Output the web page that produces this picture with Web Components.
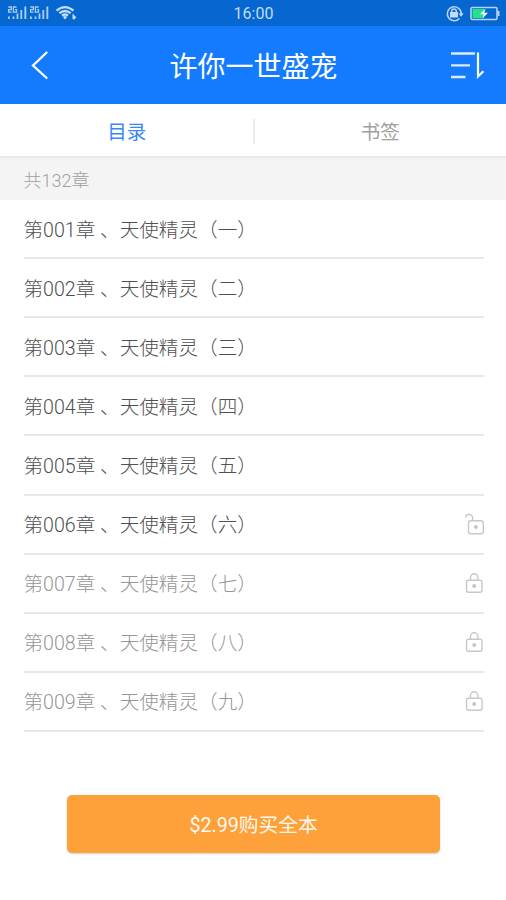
<!DOCTYPE html>
<html lang="zh-CN">
<head>
<meta charset="utf-8">
<title>许你一世盛宠</title>
<style>
  body {
    margin: 0;
    background: #fff;
    font-family: Roboto, "Noto Sans CJK SC", sans-serif;
  }
</style>
</head>
<body>
<book-catalog>
  <status-bar>16:00</status-bar>
  <title-bar>许你一世盛宠</title-bar>
  <tab-bar>
    <span slot="first">目录</span>
    <span slot="second">书签</span>
  </tab-bar>
  <chapter-count>共132章</chapter-count>
  <chapter-row>第001章 、天使精灵（一）</chapter-row>
  <chapter-row>第002章 、天使精灵（二）</chapter-row>
  <chapter-row>第003章 、天使精灵（三）</chapter-row>
  <chapter-row>第004章 、天使精灵（四）</chapter-row>
  <chapter-row>第005章 、天使精灵（五）</chapter-row>
  <chapter-row lock="open">第006章 、天使精灵（六）</chapter-row>
  <chapter-row lock="closed">第007章 、天使精灵（七）</chapter-row>
  <chapter-row lock="closed">第008章 、天使精灵（八）</chapter-row>
  <chapter-row lock="closed">第009章 、天使精灵（九）</chapter-row>
  <buy-button>$2.99购买全本</buy-button>
</book-catalog>

<script>
/**
 * Page container
 */
class BookCatalog extends HTMLElement {
    connectedCallback() {
        this.attachShadow({ mode: 'open' }).innerHTML = `
      <style>
        :host {
          display: flex;
          flex-direction: column;
          height: 900px;
          overflow: hidden;
        }
      </style>
      <slot></slot>
    `;
    }
}

/**
 * Phone status bar: signal and wifi, clock, rotation lock and battery
 */
class StatusBar extends HTMLElement {
    connectedCallback() {
        this.attachShadow({ mode: 'open' }).innerHTML = `
      <style>
        :host {
          display: grid;
          grid-template-columns: 1fr auto 1fr;
          align-items: center;
          height: 26px;
          padding: 0 6px 0 7px;
          box-sizing: border-box;
          background: #0567cf;
          color: #c3dcf8;
          font-size: 16px;
        }
        svg {
          display: block;
        }
        .right {
          justify-self: end;
        }
        .clock {
          padding-top: 2px;
          line-height: 24px;
        }
      </style>
      <svg width="72" height="26" viewBox="7 0 72 26" fill="#a9cdf5">
        <g id="signal">
          <path d="M8 16.500h1.800V19H8zM12.600 16.500h1.800V19h-1.800zM16.600 13.500h1.800V19h-1.800zM20.400 10h1.800v9h-1.800zM24.400 6.500h1.900V19h-1.900z"/>
          <path d="M8.300 7h3v2.600H8.600v2.600h3M16.600 7h-3.200v5.200h3.100v-2.500h-1.400" fill="none" stroke="#a9cdf5" stroke-width="1.300"/>
        </g>
        <use href="#signal" x="22"/>
        <g fill="none" stroke="#c3dcf8" stroke-width="2.300">
          <path d="M56.500 10.600q8.500-7 17 0M59.300 13.200q5.700-4.500 11.400 0M62 15.700q3-2.300 6 0"/>
        </g>
        <path d="M62.800 17l2.200-1.200 2.200 1.200L65 19.500zM72.500 13.500l3.800 3.800-2.300 2.500-1.500-1z" fill="#c3dcf8"/>
      </svg>
      <div class="clock"><slot></slot></div>
      <svg class="right" width="56" height="26" viewBox="444 0 56 26">
        <g fill="none" stroke="#b5d4f7" stroke-width="1.500">
          <path d="M459.500 18.500a7 7 0 1 1 1.800-4.500"/>
          <path d="M451.700 12.500v-1.200a2.300 2.300 0 0 1 4.600 0v1.200"/>
        </g>
        <path d="M450 12h8v5.500h-8zM458.500 13.500h5.200l-2.600 3.200z" fill="#c3dcf8"/>
        <rect x="471" y="7.500" width="26" height="12" rx="1.500" fill="none" stroke="#b5d4f7" stroke-width="1.600"/>
        <path d="M497.500 11h2v5h-2z" fill="#b5d4f7"/>
        <path d="M472.500 9H484v9h-11.500z" fill="#23e28c"/>
        <path d="M485.500 8.500l-5.300 5.800h3.600l-1.300 4.200 5.500-5.800h-3.700z" fill="#f2fbff"/>
      </svg>
    `;
    }
}

/**
 * Blue header with back and sort icons
 */
class TitleBar extends HTMLElement {
    connectedCallback() {
        this.attachShadow({ mode: 'open' }).innerHTML = `
      <style>
        :host {
          display: grid;
          grid-template-columns: 36px 1fr 36px;
          align-items: center;
          height: 78px;
          padding: 0 20px 0 21px;
          box-sizing: border-box;
          background: #147bff;
          color: #fff;
          font-size: 28px;
        }
        .title {
          padding-top: 5px;
          line-height: 40px;
          text-align: center;
        }
        svg {
          display: block;
          width: 36px;
          height: 78px;
          fill: none;
          stroke: #fff;
        }
      </style>
      <svg viewBox="21 26 36 78"><path d="M47.200 52L33 65.500l14.200 13" stroke-width="2.300"/></svg>
      <div class="title"><slot></slot></div>
      <svg viewBox="450 26 36 78" stroke-width="2.300">
        <path d="M451 53.500h24M451 65.300h19M451 77h14.500" stroke="#dcebff"/>
        <path d="M478 52.500v24l5.400-5.300" stroke-width="2.200"/>
      </svg>
    `;
    }
}

/**
 * Two tabs with a divider, the first one is active
 */
class TabBar extends HTMLElement {
    connectedCallback() {
        this.attachShadow({ mode: 'open' }).innerHTML = `
      <style>
        :host {
          display: flex;
          align-items: center;
          height: 54px;
          padding-left: 1px;
          box-sizing: border-box;
          border-bottom: 2px solid #e8e8e8;
          font-size: 19.500px;
          line-height: 28px;
        }
        .tab {
          flex: 1;
          padding-top: 5px;
          text-align: center;
          color: #a0a0a0;
        }
        .active {
          color: #3a87f8;
        }
        .divider {
          width: 2px;
          height: 25px;
          margin-top: 2px;
          background: #ececec;
        }
      </style>
      <div class="tab active"><slot name="first"></slot></div>
      <div class="divider"></div>
      <div class="tab"><slot name="second"></slot></div>
    `;
    }
}

class ChapterCount extends HTMLElement {
    connectedCallback() {
        this.attachShadow({ mode: 'open' }).innerHTML = `
      <style>
        :host {
          display: block;
          height: 42px;
          padding-left: 23.500px;
          background: #f4f4f4;
          color: #9f9f9f;
          font-size: 18px;
          font-weight: 300;
          line-height: 45px;
        }
      </style>
      <slot></slot>
    `;
    }
}

/**
 * Chapter line, lock="open" or lock="closed" adds the icon
 */
class ChapterRow extends HTMLElement {
    connectedCallback() {
        const icons = {
            open: '<path d="M1.500 5.500a3.600 3.600 0 0 1 7-.6V9"/><rect x="4.500" y="8.700" width="14.800" height="13" rx="2.500"/><circle cx="11.900" cy="15" r="1.300"/>',
            closed: '<path d="M6.500 9V6.500a3.700 3.700 0 0 1 7.400 0V9"/><rect x="2.500" y="9.200" width="15.500" height="12" rx="2"/><circle cx="10.200" cy="15" r="1.300"/>'
        };
        const icon = icons[this.getAttribute('lock')];
        this.attachShadow({ mode: 'open' }).innerHTML = `
      <style>
        :host {
          display: flex;
          align-items: center;
          justify-content: space-between;
          height: 59.120px;
          margin: 0 22px 0 23.500px;
          box-sizing: border-box;
          border-bottom: 2px solid #e8e8e8;
          color: #505050;
          font-size: 19.600px;
          font-weight: 300;
          line-height: 28px;
        }
        :host([lock="closed"]) {
          color: #969696;
        }
        .name {
          padding-top: 4px;
          white-space: nowrap;
        }
        svg {
          display: block;
          fill: none;
          stroke: #c8c8c8;
          stroke-width: 1.400;
        }
        circle {
          fill: #bababa;
        }
      </style>
      <div class="name"><slot></slot></div>
      ${icon ? `<svg width="20" height="24" viewBox="0 0 20 24">${icon}</svg>` : ''}
    `;
    }
}

class BuyButton extends HTMLElement {
    connectedCallback() {
        this.attachShadow({ mode: 'open' }).innerHTML = `
      <style>
        :host {
          display: block;
          margin: 63px 66px 0 67px;
        }
        button {
          display: block;
          width: 100%;
          height: 58px;
          padding: 0;
          border: 0;
          border-radius: 5px;
          background: #fea13a;
          box-shadow: 0 1px 2px rgba(120,120,120,0.35);
          color: #fff8ed;
          font-family: inherit;
          font-size: 19.700px;
        }
      </style>
      <button><slot></slot></button>
    `;
    }
}

customElements.define('book-catalog', BookCatalog);
customElements.define('status-bar', StatusBar);
customElements.define('title-bar', TitleBar);
customElements.define('tab-bar', TabBar);
customElements.define('chapter-count', ChapterCount);
customElements.define('chapter-row', ChapterRow);
customElements.define('buy-button', BuyButton);
</script>
</body>
</html>
